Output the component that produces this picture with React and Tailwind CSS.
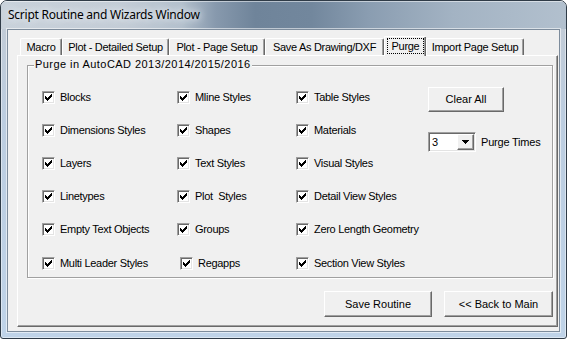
import React from "react";

function Check() {
  return (
    <svg width="7" height="7" viewBox="0 0 7 7" shapeRendering="crispEdges" className="block">
      <path d="M0 2h1v3H0zM1 3h1v3H1zM2 4h1v3H2zM3 3h1v3H3zM4 2h1v3H4zM5 1h1v3H5zM6 0h1v3H6z" fill="#000" />
    </svg>
  );
}

function CheckBox({ label, cls }) {
  return (
    <div className={"flex h-[13px] items-center " + cls}>
      <div className="flex h-[13px] w-[13px] shrink-0 items-center justify-center border border-t-[#a0a0a0] border-l-[#a0a0a0] border-r-white border-b-white bg-white shadow-[inset_1px_1px_0_#696969,inset_-1px_-1px_0_#e3e3e3]">
        <Check />
      </div>
      <span className="ml-[5px] whitespace-pre leading-[13px] tracking-[-0.3px]">{label}</span>
    </div>
  );
}

const rows = [
  ["Blocks", "Mline Styles", "Table Styles", "h-[33px]"],
  ["Dimensions Styles", "Shapes", "Materials", "h-[33px]"],
  ["Layers", "Text Styles", "Visual Styles", "h-[33px]"],
  ["Linetypes", "Plot  Styles", "Detail View Styles", "h-[33px]"],
  ["Empty Text Objects", "Groups", "Zero Length Geometry", "h-[34px]"],
  ["Multi Leader Styles", "Regapps", "Section View Styles", "h-[13px]"],
];

const tabs = [
  { label: "Macro", w: "w-[42px]" },
  { label: "Plot - Detailed Setup", w: "w-[107px]" },
  { label: "Plot - Page Setup", w: "w-[96px]" },
  { label: "Save As Drawing/DXF", w: "w-[119px]" },
  { label: "Purge", w: "w-[42px]", sel: true },
  { label: "Import Page Setup", w: "w-[98px]" },
];

const raised =
  "border border-t-white border-l-white border-r-[#696969] border-b-[#696969] bg-[#f0f0f0] shadow-[inset_-1px_-1px_0_#a0a0a0]";

export default function App() {
  return (
    <div className="flex h-[339px] w-[567px] flex-col overflow-hidden rounded-t-[7px] rounded-b-[3px] border border-[#2f3b47] bg-[linear-gradient(180deg,#c3cbd4_0%,#bccde0_35%,#bfd3e8_100%)] shadow-[inset_0_0_0_1px_rgba(255,255,255,0.45)] font-['Liberation_Sans',Arial,sans-serif] text-[11px] text-black">
      {/* Title bar */}
      <div className="flex h-[28px] shrink-0 items-center bg-[linear-gradient(90deg,#c9d2db_0%,#c3ccd6_22%,#b3c0cd_32%,#8799ad_38%,#6f849a_45%,#72879d_55%,#8a9db1_65%,#a3b3c3_80%,#b2c0ce_100%)] pl-[7px] shadow-[inset_0_1px_0_rgba(255,255,255,0.5)]">
        <span className="font-['Noto_Sans',sans-serif] text-[12px] leading-[16px] tracking-[-0.25px] text-black [text-shadow:0_0_6px_#e8edf2,0_0_10px_#e8edf2]">
          Script Routine and Wizards Window
        </span>
      </div>

      {/* Client area */}
      <div className="mx-[6px] h-[303px] shrink-0 border border-[#7d8c9c] bg-[#f0f0f0] shadow-[0_0_0_1px_rgba(255,255,255,0.55)]">
        <div className="ml-[9px] mt-[6px] w-[541px]">
          {/* Tab strip */}
          <div className="flex h-[19px] items-end pl-[3px] tracking-[-0.3px]">
            {tabs.map((t) =>
              t.sel ? (
                <div
                  key={t.label}
                  className={"relative z-10 mb-[-1px] flex h-[20px] items-start justify-center rounded-t-[2px] border-l border-t border-l-white border-t-white bg-[#f0f0f0] pt-[1px] " + t.w}
                >
                  <div className="flex h-[16px] w-[37px] items-center justify-center border border-dotted border-black leading-[13px]">
                    {t.label}
                  </div>
                  <div className="absolute right-0 top-0 h-full w-[2px] border-r border-r-[#696969] shadow-[inset_-1px_0_0_#a0a0a0]" />
                </div>
              ) : (
                <div
                  key={t.label}
                  className={"flex h-[17px] items-center justify-center rounded-t-[2px] border-l border-r border-t border-l-white border-r-[#696969] border-t-white bg-[#f0f0f0] leading-[13px] shadow-[inset_-1px_0_0_#a0a0a0] " + t.w}
                >
                  {t.label}
                </div>
              )
            )}
          </div>

          {/* Tab panel */}
          <div className="flex h-[272px] flex-col border border-t-white border-l-white border-r-[#696969] border-b-[#696969] pl-[9px] pr-[4px] pt-[9px] shadow-[inset_-1px_-1px_0_#a0a0a0]">
            {/* Group box */}
            <div className="relative h-[213px] w-[526px] border border-[#a0a0a0] shadow-[inset_1px_1px_0_#fff,1px_1px_0_#fff]">
              <div className="absolute left-[6px] top-[-8px] bg-[#f0f0f0] px-[1px] leading-[13px] tracking-[0.45px]">
                Purge in AutoCAD 2013/2014/2015/2016
              </div>
              <div className="flex pl-[14px]">
                <div className="w-[386px] pt-[25px]">
                  {rows.map((r) => (
                    <div key={r[0]} className={"flex items-start " + r[3]}>
                      <CheckBox label={r[0]} cls="w-[135px]" />
                      <CheckBox label={r[1]} cls={r[1] === "Regapps" ? "w-[119px] pl-[3px]" : "w-[119px]"} />
                      <CheckBox label={r[2]} cls="" />
                    </div>
                  ))}
                </div>
                <div className="flex flex-col pt-[21px]">
                  <div className={"flex h-[25px] w-[76px] items-center justify-center " + raised}>Clear All</div>
                  <div className="mt-[20px] flex items-center">
                    <div className="flex h-[20px] w-[48px] items-center border border-t-[#a0a0a0] border-l-[#a0a0a0] border-r-white border-b-white bg-white shadow-[inset_1px_1px_0_#696969,inset_-1px_-1px_0_#e3e3e3]">
                      <span className="flex-1 pl-[3px] leading-[13px]">3</span>
                      <div className={"mr-[1px] flex h-[16px] w-[17px] items-center justify-center " + raised}>
                        <svg width="7" height="4" viewBox="0 0 7 4" shapeRendering="crispEdges" className="block">
                          <path d="M0 0h7v1H0zM1 1h5v1H1zM2 2h3v1H2zM3 3h1v1H3z" fill="#000" />
                        </svg>
                      </div>
                    </div>
                    <span className="ml-[5px] leading-[13px] tracking-[-0.2px]">Purge Times</span>
                  </div>
                </div>
              </div>
            </div>

            {/* Buttons */}
            <div className="mt-[13px] flex justify-end gap-[12px]">
              <div className={"flex h-[26px] w-[108px] items-center justify-center " + raised}>Save Routine</div>
              <div className={"flex h-[26px] w-[109px] items-center justify-center " + raised}>&lt;&lt; Back to Main</div>
            </div>
          </div>
        </div>
      </div>
    </div>
  );
}
